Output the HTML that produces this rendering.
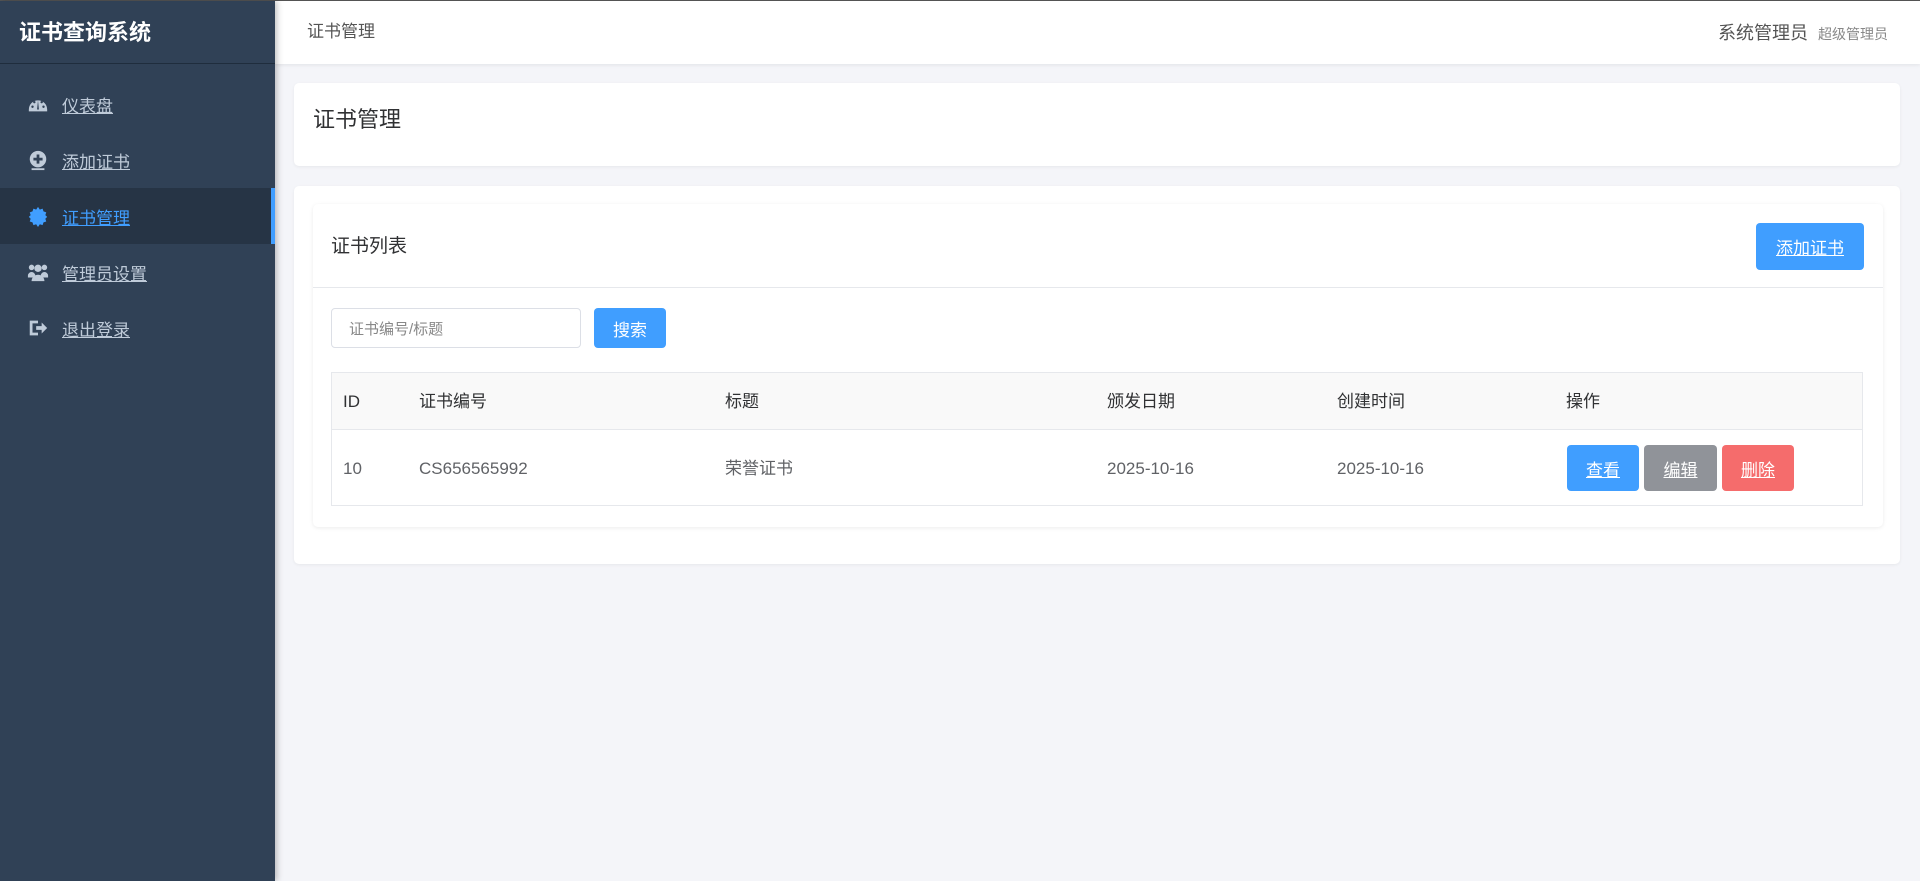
<!DOCTYPE html>
<html><head><meta charset="utf-8"><style>
*{box-sizing:border-box;margin:0;padding:0}
body{width:1920px;height:880px;overflow:hidden;background:#f4f5f9;font-family:"Liberation Sans","Noto Sans CJK SC",sans-serif;color:#303133;position:relative;border-top:1px solid #555}
.side{position:absolute;left:0;top:0;width:275px;height:880px;background:#304156;box-shadow:2px 0 6px rgba(0,0,0,.25);z-index:2}
.logo{height:63px;border-bottom:1px solid #1f2d3d;color:#fff;font-weight:bold;font-size:22px;line-height:63px;padding-left:19px}
.nav{margin-top:12px}
.item{height:56px;display:flex;align-items:center;padding-left:27px;color:#bfcbd9;font-size:17px;text-decoration:underline;position:relative}
.item svg{width:22px;height:22px;margin-right:13px}
.item.act{background:#263445;color:#409eff}
.item.act:after{content:"";position:absolute;right:0;top:0;width:4px;height:56px;background:#409eff}
.top{position:absolute;left:275px;right:0;top:0;height:63px;background:#fff;box-shadow:0 1px 4px rgba(0,0,0,.08)}
.top .t{position:absolute;left:32px;top:21px;font-size:17px;color:#555;line-height:20px}
.top .u{position:absolute;right:32px;top:21px;font-size:18px;color:#555;line-height:22px}
.top .u small{font-size:14px;color:#888;margin-left:10px}
.card{position:absolute;background:#fff;border-radius:5px;box-shadow:0 1px 3px rgba(0,0,0,.06)}
.btn{position:absolute;color:#fff;border-radius:4px;display:flex;align-items:center;justify-content:center;font-size:17px}
.b{background:#409eff}
.tx{position:absolute;font-size:17px;line-height:20px;height:20px;white-space:nowrap}
</style></head><body>
<div class="side">
<div class="logo">证书查询系统</div>
<div class="nav">
<div class="item"><svg viewBox="0 0 24 24"><path d="M2 18a10 10 0 0 1 20 0v2H2z" fill="#bfcbd9"/><circle cx="6" cy="15" r="1.3" fill="#304156"/><circle cx="8" cy="10" r="1.3" fill="#304156"/><circle cx="16" cy="10" r="1.3" fill="#304156"/><circle cx="18" cy="15" r="1.3" fill="#304156"/><path d="M12 8l1 10h-2z" fill="#304156"/></svg>仪表盘</div>
<div class="item"><svg viewBox="0 0 24 24"><circle cx="12" cy="11" r="9" fill="#bfcbd9"/><path d="M12 6v10M7 11h10" stroke="#304156" stroke-width="3"/><path d="M5 22h14" stroke="#bfcbd9" stroke-width="2"/></svg>添加证书</div>
<div class="item act"><svg viewBox="0 0 24 24"><path d="M12 2l2 3 3-1 1 3 3 1-1 3 2 2-2 2 1 3-3 1-1 3-3-1-2 3-2-3-3 1-1-3-3-1 1-3-2-2 2-2-1-3 3-1 1-3 3 1z" fill="#409eff"/></svg>证书管理</div>
<div class="item"><svg viewBox="0 0 24 24"><circle cx="5" cy="7" r="3" fill="#bfcbd9"/><circle cx="19" cy="7" r="3" fill="#bfcbd9"/><circle cx="12" cy="8" r="4" fill="#bfcbd9"/><path d="M1 16a4 4 0 0 1 8 0v2H1zM15 16a4 4 0 0 1 8 0v2h-8zM5 22a7 7 0 0 1 14 0z" fill="#bfcbd9"/></svg>管理员设置</div>
<div class="item"><svg viewBox="0 0 24 24"><path d="M3 4h9v3H6v10h6v3H3z" fill="#bfcbd9"/><path d="M10 10h6V6l6 6-6 6v-4h-6z" fill="#bfcbd9"/></svg>退出登录</div>
</div></div>
<div class="top"><div class="t">证书管理</div><div class="u">系统管理员<small>超级管理员</small></div></div>
<div class="card" style="left:294px;top:82px;width:1606px;height:83px"><div class="tx" style="left:19px;top:24px;font-size:22px;line-height:26px;height:26px">证书管理</div></div>
<div class="card" style="left:294px;top:185px;width:1606px;height:378px"></div>
<div class="card" style="left:313px;top:203px;width:1570px;height:323px;box-shadow:0 1px 4px rgba(0,0,0,.08)">
<div style="position:absolute;left:0;right:0;top:0;height:84px;border-bottom:1px solid #e6e8ec"></div>
<div class="tx" style="left:18px;top:31px;font-size:19px;line-height:24px;height:24px">证书列表</div>
<div class="btn b" style="left:1443px;top:19px;width:108px;height:47px;text-decoration:underline">添加证书</div>
<div style="position:absolute;left:18px;top:104px;width:250px;height:40px;border:1px solid #dcdfe6;border-radius:4px;font-size:15px;color:#888;padding:9px 17px">证书编号/标题</div>
<div class="btn b" style="left:281px;top:104px;width:72px;height:40px">搜索</div>
<div style="position:absolute;left:18px;top:168px;width:1532px;height:134px;border:1px solid #e6e8ec">
<div style="height:57px;background:#f9f9f9;border-bottom:1px solid #e6e8ec"></div>
</div>
<div class="tx" style="left:30px;top:188px">ID</div>
<div class="tx" style="left:106px;top:188px">证书编号</div>
<div class="tx" style="left:412px;top:188px">标题</div>
<div class="tx" style="left:794px;top:188px">颁发日期</div>
<div class="tx" style="left:1024px;top:188px">创建时间</div>
<div class="tx" style="left:1253px;top:188px">操作</div>
<div class="tx" style="left:30px;top:255px;color:#606266">10</div>
<div class="tx" style="left:106px;top:255px;color:#606266">CS656565992</div>
<div class="tx" style="left:412px;top:255px;color:#606266">荣誉证书</div>
<div class="tx" style="left:794px;top:255px;color:#606266">2025-10-16</div>
<div class="tx" style="left:1024px;top:255px;color:#606266">2025-10-16</div>
<div class="btn b" style="left:1254px;top:241px;width:72px;height:46px;text-decoration:underline">查看</div>
<div class="btn" style="left:1331px;top:241px;width:73px;height:46px;background:#909399;text-decoration:underline">编辑</div>
<div class="btn" style="left:1409px;top:241px;width:72px;height:46px;background:#f56c6c;text-decoration:underline">删除</div>
</div>
</body></html>
